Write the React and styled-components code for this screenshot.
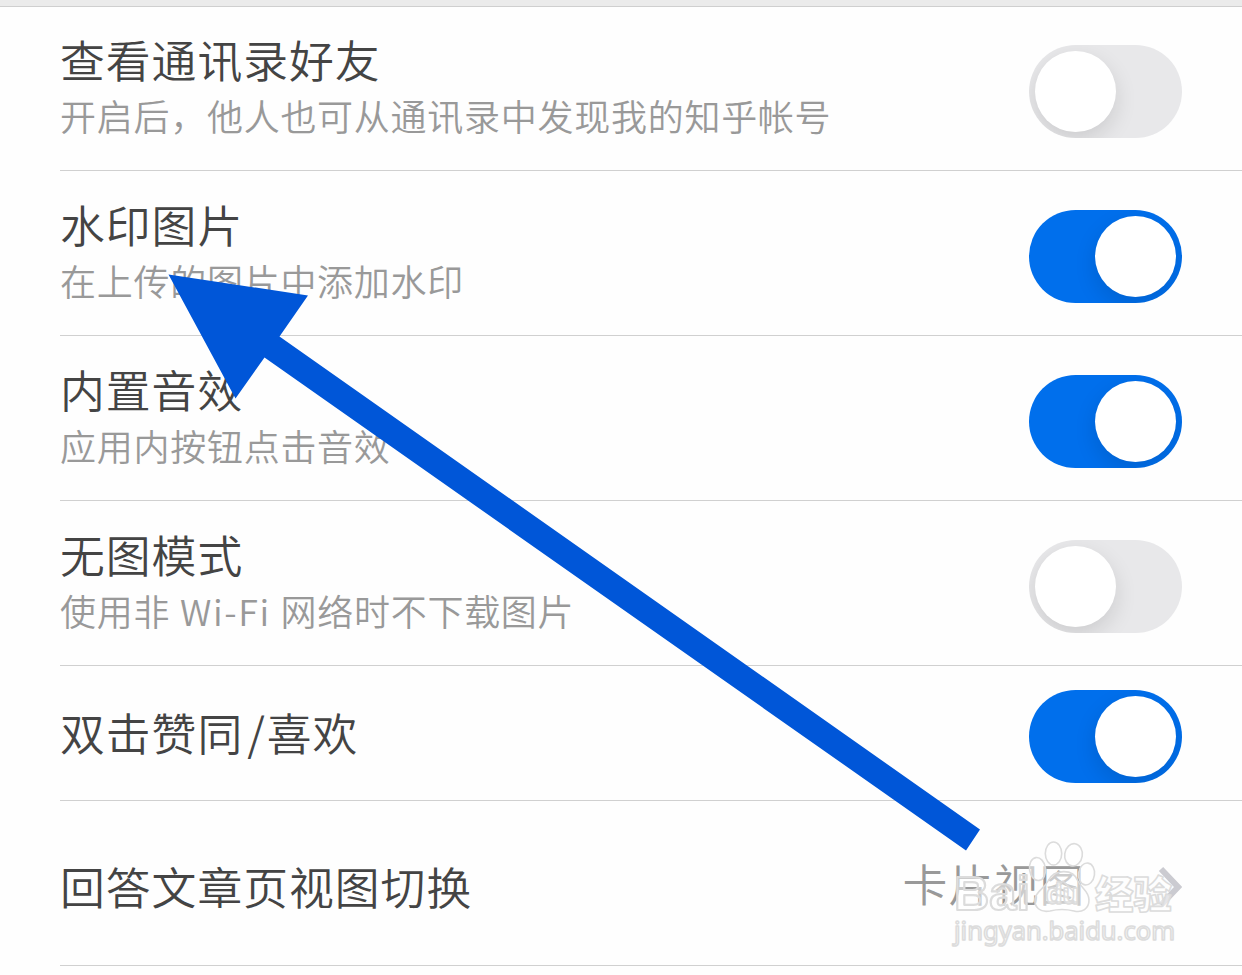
import React from 'react'
import styled, { createGlobalStyle } from 'styled-components'


const rows = [
    {title:'查看通讯录好友', note:'开启后，他人也可从通讯录中发现我的知乎帐号', on:false, first:true},
    {title:'水印图片', note:'在上传的图片中添加水印', on:true},
    {title:'内置音效', note:'应用内按钮点击音效', on:true},
    {title:'无图模式', note:'使用非 Wi-Fi 网络时不下载图片', on:false},
]

const Toggle = ({on}) => (
    <Switch role="switch" aria-checked={on} $on={on}>
        <Knob />
    </Switch>
)

// latin words get wider tracking than the chinese text round them
const withLatin = (text) => text.split(/([A-Za-z-]+)/).map((part, i) => (
    i % 2 ? <Latin key={i}>{part}</Latin> : part
))

const SettingRow = ({title,note,on,first}) => (
    <Row $first={first}>
        <Labels>
            <Title>{title}</Title>
            <Note>{withLatin(note)}</Note>
        </Labels>
        <Toggle on={on} />
    </Row>
)

const Watermark = () => (
    <Mark width="242" height="120" viewBox="0 0 242 120">
        <g fill="#fff" fillOpacity=".5" stroke="#dcdcdc" strokeWidth="1.6" strokeLinejoin="round">
            <ellipse cx="97.5" cy="35" rx="8" ry="11.5" transform="rotate(-8 97.5 35)" />
            <ellipse cx="113.5" cy="19.5" rx="8.2" ry="11.5" />
            <ellipse cx="133.5" cy="20.8" rx="8.8" ry="11.2" transform="rotate(8 133.5 20.8)" />
            <ellipse cx="146.5" cy="40" rx="8" ry="11" transform="rotate(8 146.5 40)" />
            <path d="M108 47C114 35 133 34 138 47C141 54 149 57 149 66C149 75 142 79 134 77Q122 74 110 77C100 79 94 73 95 65C96 57 104 55 108 47Z" />
            <path d="M112 58L123 47L134 58" fill="none" />
            <BaiText x="14" y="76" textLength="76" lengthAdjust="spacingAndGlyphs">Bai</BaiText>
            <DuText x="106" y="70" textLength="33" lengthAdjust="spacingAndGlyphs">du</DuText>
            <NameText x="155" y="73.5" textLength="77" lengthAdjust="spacingAndGlyphs">经验</NameText>
            <UrlText x="14" y="106" textLength="221" lengthAdjust="spacingAndGlyphs">jingyan.baidu.com</UrlText>
        </g>
    </Mark>
)

const App = () => {
    return (
        <Screen>
            <GlobalStyle />
            <TopStrip />
            {rows.map((row) => (
                <SettingRow key={row.title} {...row} />
            ))}
            <ShortRow>
                <Title>双击赞同<Slash>/</Slash>喜欢</Title>
                <Toggle on />
            </ShortRow>
            <LinkRow>
                <Title>回答文章页视图切换</Title>
                <Value>
                    <span>卡片视图</span>
                    <Chevron width="24" height="42" viewBox="0 0 24 42">
                        <path d="M3 3L20 21L3 39" fill="none" stroke="#cbcbd1" strokeWidth="6" />
                    </Chevron>
                </Value>
            </LinkRow>
            <Arrow width="1242" height="975" viewBox="0 0 1242 975">
                <path d="M168.5 274.5L308 295.5L279.5 336.5L980 829.5L966 850.5L264.5 357.5L235.5 398.5Z" fill="#0056d8" />
            </Arrow>
            <Watermark />
        </Screen>
    )
}


const GlobalStyle = createGlobalStyle`
    body{
        margin:0;
        background:#fefefe;
        font-family: 'Noto Sans CJK SC', sans-serif;
    }
`
const Screen = styled.main`
    position: relative;
    height: 975px;
    overflow: hidden;
`
const TopStrip = styled.div`
    height: 6px;
    background: #ebebeb;
    border-bottom: 1px solid #cfcfcf;
`
const Row = styled.section`
    box-sizing: border-box;
    display: flex;
    justify-content: space-between;
    align-items: flex-start;
    height: ${({$first}) => ($first ? '164px' : '165px')};
    margin-left: 60px;
    padding: ${({$first}) => ($first ? '38px' : '39px')} 60px 0 0;
    border-bottom: 1px solid #d0d0d0;
`
const ShortRow = styled(Row)`
    height: 135px;
    padding-top: 24px;
`
const LinkRow = styled(Row)`
    align-items: center;
    padding-top: 8px;
`
const Labels = styled.div`
    margin-top: -15px;
`
const Title = styled.div`
    font-size: 44.8px;
    font-weight: 350;
    line-height: 58px;
    letter-spacing: 1px;
    color: #444;

    ${ShortRow} &{
        margin-top: 13px;
    }

    ${LinkRow} &{
        margin-top: -3px;
    }
`
const Slash = styled.span`
    margin: 0 1px 0 4px;
`
const Note = styled.div`
    font-size: 36px;
    font-weight: 350;
    line-height: 54px;
    letter-spacing: .73px;
    color: #999;
`
const Latin = styled.span`
    margin: 0 1px;
    letter-spacing: 1.6px;
`
const Switch = styled.div`
    box-sizing: border-box;
    display: flex;
    justify-content: ${({$on}) => ($on ? 'flex-end' : 'flex-start')};
    width: 153px;
    height: 93px;
    padding: 6px;
    border-radius: 47px;
    overflow: hidden;
    background: ${({$on}) => ($on ? '#006fec' : '#e8e8ea')};
`
const Knob = styled.div`
    width: 81px;
    height: 81px;
    border-radius: 50%;
    background: #fff;
    box-shadow: 0 8px 22px rgba(0,0,0,.12);
`
const Value = styled.div`
    display: flex;
    align-items: center;
    gap: 73px;
    font-size: 44.8px;
    font-weight: 350;
    line-height: 56px;
    letter-spacing: .8px;
    color: #999;

    span{
        margin-top: -9px;
    }
`
const Chevron = styled.svg`
    display: block;
`
const Arrow = styled.svg`
    position: absolute;
    top: 0;
    left: 0;
    pointer-events: none;
`
const Mark = styled.svg`
    position: absolute;
    left: 940px;
    top: 834px;
    pointer-events: none;
`
const BaiText = styled.text`
    font: 700 49px 'Liberation Sans', sans-serif;
    stroke-width: 2.2px;
`
const DuText = styled.text`
    font: 700 29px 'Liberation Sans', sans-serif;
`
const NameText = styled.text`
    font: 900 38px 'Noto Sans CJK SC', sans-serif;
`
const UrlText = styled.text`
    font: 400 25px 'Noto Sans', sans-serif;
    fill-opacity: .9;
`


export default App
